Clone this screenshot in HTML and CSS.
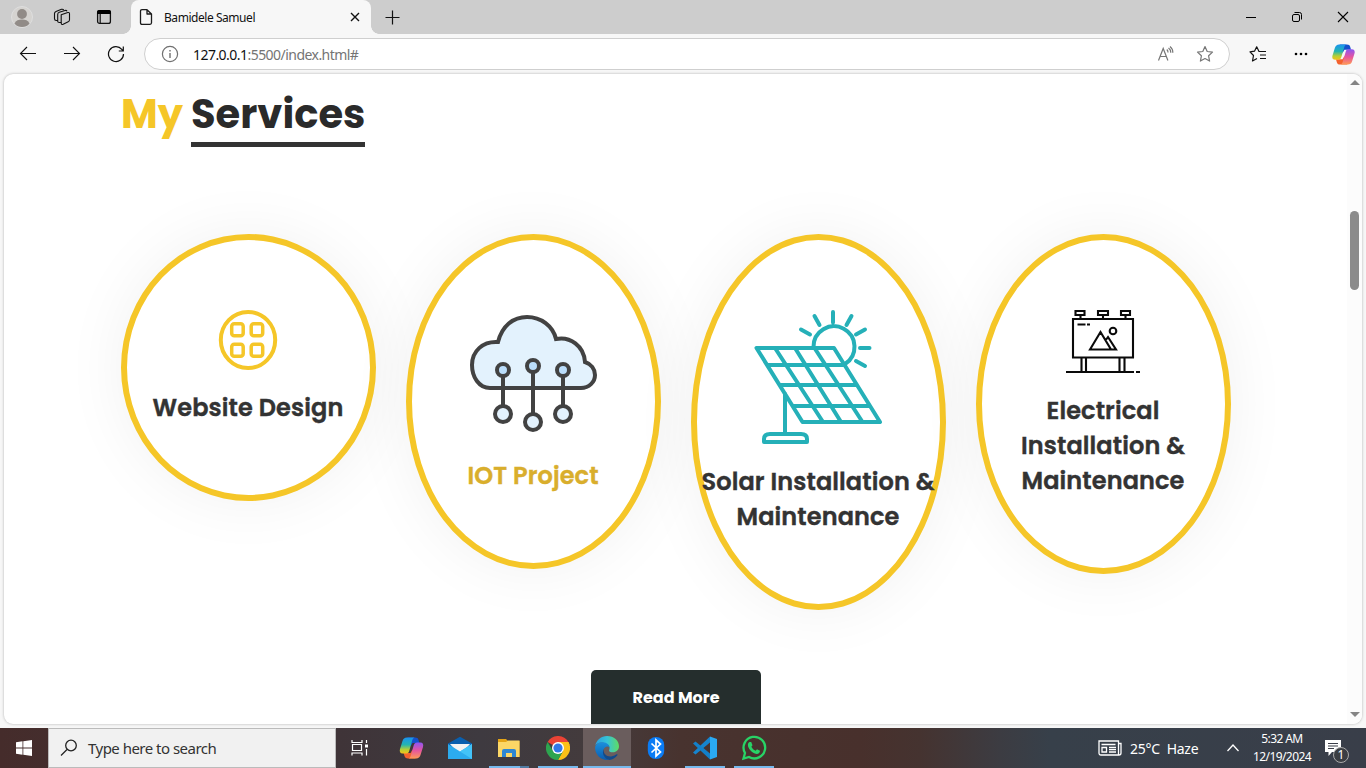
FILE: index.html
```html
<!DOCTYPE html>
<html lang="en">
<head>
<meta charset="utf-8">
<title>Bamidele Samuel</title>
<link rel="stylesheet" href="styles.css">
</head>
<body>
<svg class="defs" width="0" height="0">
  <defs>
    <linearGradient id="cpA" x1="0" y1="0" x2="0" y2="1"><stop offset="0" stop-color="#1a93f0"/><stop offset=".45" stop-color="#23b5b0"/><stop offset=".75" stop-color="#b5cf35"/><stop offset="1" stop-color="#f5c21a"/></linearGradient>
    <linearGradient id="cpB" x1="0" y1="0" x2="0" y2="1"><stop offset="0" stop-color="#8c55f5"/><stop offset=".5" stop-color="#e5559f"/><stop offset="1" stop-color="#ff9a55"/></linearGradient>
    <symbol id="copilot" viewBox="0 0 24 22">
      <path d="M8 .5h7.500c2.200 0 3 .7 3.500 2.400l.9 3H13l-2 3.600Z" fill="#1450cc"/>
      <path d="M16 21.500H8.500c-2.200 0-3-.7-3.500-2.400l-.9-3H11l2-3.600Z" fill="#f4622e"/>
      <path d="M7.500.5H15c-1.300.5-1.900 1.700-2.300 3.100L9.700 14c-.6 1.800-1.500 2.600-3.200 2.600H3.200C.6 16.600-.2 14.500.5 12L3 4C3.700 1.800 5 .5 7.500.5Z" fill="url(#cpA)"/>
      <path d="M16.500 21.500H9c1.300-.5 1.900-1.700 2.300-3.100l3-10.400c.6-1.800 1.500-2.600 3.200-2.600h3.300c2.600 0 3.400 2.100 2.700 4.600L21 18c-.7 2.200-2 3.500-4.500 3.500Z" fill="url(#cpB)"/>
    </symbol>
  </defs>
</svg>
<div class="screen">
  <header class="tabbar">
    <div class="tab-tools">
      <svg width="22" height="22" viewBox="0 0 22 22"><circle cx="11" cy="11" r="10.500" fill="#d5d3d0" stroke="#dedede"/><circle cx="11" cy="8" r="4.900" fill="#918b87"/><path d="M3.500 17.500c1.500-3.200 4-3.900 7.500-3.900s6 .7 7.500 3.900c-2 2.600-4.600 3.500-7.500 3.500s-5.500-.9-7.500-3.500Z" fill="#918b87"/></svg>
      <svg width="18" height="18" viewBox="0 0 18 18" fill="none" stroke="#111" stroke-width="1.100" stroke-linejoin="round"><path d="M8.200 6.700 14.800 4.600q1.700-.5 1.700 1.200v6q0 1.500-1.300 1.900l-5 2.500q-2 .8-2-1.200Z"/><path d="M8.200 14.500 6.600 14.500Q4.700 14.700 4.700 12.900V6.500Q4.700 4.800 6.300 4.300L12 2.500q1.500-.4 2 .8M4.600 12.500 3.200 12.500Q1.500 12.500 1.500 10.800V5.500Q1.500 4 3 3.400L8.500 1.300Q10 .9 10.800 2"/></svg>
      <svg width="16" height="16" viewBox="0 0 16 16"><rect x="1.600" y="1.600" width="12.800" height="12.800" rx="2" fill="none" stroke="#111" stroke-width="1.300"/><path d="M1 5V3q0-2 2-2h10q2 0 2 2v2Z" fill="#000"/><path d="M4.200 5v9" stroke="#111" stroke-width="1.200"/></svg>
    </div>
    <div class="tab">
      <svg width="14" height="18" viewBox="0 0 14 18" fill="none" stroke="#1b1b1b" stroke-width="1.300" stroke-linejoin="round"><path d="M3 1.700h5L12.500 6v8.800q0 1.500-1.500 1.500H3q-1.500 0-1.500-1.500V3.200Q1.500 1.700 3 1.700ZM8 1.700V6h4.500"/></svg>
      <span class="tab-title">Bamidele Samuel</span>
      <svg width="10" height="10" viewBox="0 0 10 10" stroke="#111" stroke-width="1.400"><path d="m1 1 8 8M9 1 1 9"/></svg>
    </div>
    <svg class="new-tab" width="15" height="15" viewBox="0 0 15 15" stroke="#111" stroke-width="1.200"><path d="M7.500.5v14M.5 7.500h14"/></svg>
    <div class="window-tools">
      <svg width="12" height="12" viewBox="0 0 12 12"><path d="M1 6.500h10" stroke="#000"/></svg>
      <svg width="12" height="12" viewBox="0 0 12 12" fill="none" stroke="#000"><rect x="1.500" y="3.500" width="7" height="7" rx="1.500"/><path d="M3.500 1.500h5q2 0 2 2v5"/></svg>
      <svg width="12" height="12" viewBox="0 0 12 12" stroke="#000" stroke-width="1.100"><path d="m1 1 10 10M11 1 1 11"/></svg>
    </div>
  </header>

  <nav class="toolbar">
    <div class="nav-buttons">
      <svg width="18" height="16" viewBox="0 0 18 16" fill="none" stroke="#111" stroke-width="1.100"><path d="M17 7.500H1.500M8 1 1.500 7.500 8 14"/></svg>
      <svg width="18" height="16" viewBox="0 0 18 16" fill="none" stroke="#111" stroke-width="1.100"><path d="M1 7.500h15.500M10 1l6.500 6.500L10 14"/></svg>
      <svg width="18" height="18" viewBox="0 0 18 18" fill="none" stroke="#111" stroke-width="1.200"><path d="M16.500 9A7.500 7.500 0 1 1 14.800 4.300L16.200 6M16.300 1.500V6h-4.500"/></svg>
    </div>
    <div class="address">
      <svg width="18" height="18" viewBox="0 0 18 18" fill="none" stroke="#707070" stroke-width="1.200"><circle cx="9" cy="9" r="7.600"/><path d="M9 8v5M9 5v1.500" stroke-width="1.400"/></svg>
      <span class="url"><b>127.0.0.1</b>:5500/index.html#</span>
      <svg class="read" width="17" height="18" viewBox="0 0 17 18" fill="none" stroke="#777" stroke-width="1.200"><path d="m1.500 15.500 4.700-12 4.700 12M3.200 11.500h6M9.800 4.500q1.300 1.200 1.200 3M11.500 3q2.400 1.700 2.300 4.700M13 1.500Q16 4 15.800 7.700"/></svg>
      <svg width="18" height="18" viewBox="0 0 18 18" fill="none" stroke="#777" stroke-width="1.200" stroke-linejoin="round"><path d="m9 1.500 2.200 5 5.300.6-3.900 3.700 1 5.300L9 13.500l-4.600 2.600 1-5.300L1.500 7.100l5.300-.6Z"/></svg>
    </div>
    <div class="toolbar-end">
      <svg width="18" height="18" viewBox="0 0 18 18" fill="none" stroke="#111" stroke-width="1.200" stroke-linejoin="round"><path d="M12 6.500H10L7.700 1.800 5.500 6.200l-4.500.6 3.500 3.700-1 5.500L8 13.500M11.500 6.500H17M11 10h6M11 13.500h6"/></svg>
      <svg class="dots" width="14" height="4" viewBox="0 0 14 4"><circle cx="2" cy="2" r="1.300"/><circle cx="7" cy="2" r="1.300"/><circle cx="12" cy="2" r="1.300"/></svg>
      <svg width="23" height="21"><use href="#copilot"/></svg>
    </div>
  </nav>

  <div class="viewport">
    <main class="services">
      <h1 class="heading"><span class="my">My</span><span class="underlined">Services</span></h1>
      <div class="cards">
        <article class="card">
          <svg width="60" height="60" viewBox="0 0 60 60" fill="none" stroke="#f5c628"><ellipse cx="30" cy="30" rx="27.200" ry="28" stroke-width="4"/><g stroke-width="3.500"><rect x="13.700" y="13.700" width="11.500" height="12" rx="2.500"/><rect x="33.200" y="13.700" width="11.500" height="12" rx="2.500"/><rect x="13.700" y="34.200" width="11.500" height="12" rx="2.500"/><rect x="33.200" y="34.200" width="11.500" height="12" rx="2.500"/></g></svg>
          <h2>Website Design</h2>
        </article>
        <article class="card">
          <svg width="128" height="128" viewBox="0 0 128 128" stroke="#424242" stroke-width="4"><path d="M21 78C10 78 3 67 3 55 3 41 14 31 29 32 33 16 44 7 58 7c14 0 26 9 29 22 14-3 28 7 29 23 6 2 10 7 10 13 0 7-6 13-14 13Z" fill="#e3f2fd"/><path d="M34 66v32M64 62v44M94 66v32"/><g fill="#bbdefb"><circle cx="34" cy="60" r="6"/><circle cx="64" cy="56" r="6"/><circle cx="94" cy="60" r="6"/></g><g fill="#e3f2fd"><circle cx="34" cy="104" r="8"/><circle cx="64" cy="112" r="8"/><circle cx="94" cy="104" r="8"/></g></svg>
          <h2 class="gold">IOT Project</h2>
        </article>
        <article class="card">
          <svg width="134" height="134" viewBox="0 0 134 134" fill="none" stroke="#25b0b8" stroke-width="4" stroke-linejoin="round" stroke-linecap="round"><path d="M62.500 37A20.500 20.500 0 1 1 94 54M82 2v10.500M63.500 6l5 9M100.500 6l-5 9M50 19.500l9 5M114 19.500l-9 5M109 38h9.500M105 51l9 5"/><path d="M5.500 38H83l46 74H51.500ZM16.500 55h76M29 75h77M42 96h77M24 38l48 74M44 38l46 74M63.500 38l48 74"/><path d="M34 84v39M19 124h31q6 0 6 5v3H13v-3q0-5 6-5Z"/></svg>
          <h2>Solar Installation &amp;<br>Maintenance</h2>
        </article>
        <article class="card">
          <svg width="74" height="63" viewBox="0 0 74 63" fill="none" stroke="#0a0a0a" stroke-width="2.100"><path d="M7 9h60v38.500H7ZM9.500 1h9v4h-9ZM32 1h10v4H32ZM55 1h9v4h-9ZM14.500 5v4M37 5v4M59.500 5v4M15.500 48v13M20 48v13M53.500 48v13M58.500 48v13M0 62h68M70 62h4M11.500 14.500h8M21 14.500h3M24 39.500 34.500 22 45 39.500ZM39.500 30.500l2.500-3.500L50 39.500h-5"/><circle cx="47" cy="21" r="3.300"/></svg>
          <h2>Electrical<br>Installation &amp;<br>Maintenance</h2>
        </article>
      </div>
      <a class="more">Read More</a>
    </main>
    <aside class="scrollbar"><i class="up"></i><i class="thumb"></i><i class="down"></i></aside>
  </div>

  <footer class="taskbar">
    <div class="start"><svg width="16" height="16" viewBox="0 0 16 16" fill="#fff"><path d="M0 2.200 6.500 1.300v6.300H0ZM7.300 1.200 16 0v7.600H7.300ZM0 8.400h6.500v6.300L0 13.800ZM7.300 8.400H16V16l-8.700-1.200Z"/></svg></div>
    <div class="search"><svg width="18" height="18" viewBox="0 0 18 18" fill="none" stroke="#222" stroke-width="1.300"><circle cx="11" cy="6.500" r="5.300"/><path d="M7 10.500 1 16.500"/></svg><span>Type here to search</span></div>
    <div class="apps">
      <div class="app view"><svg width="18" height="16" viewBox="0 0 18 16" fill="none" stroke="#fff" stroke-width="1.200"><path d="M1 0v2.500h10V0M1 15.500v-2.500h10v2.500M1.500 4.500h9v6h-9ZM15.500 0v3M15.500 9v6.500"/><path d="M14 4.500h3v3h-3Z" fill="#fff" stroke="none"/></svg></div>
      <div class="app"><svg width="25" height="22"><use href="#copilot"/></svg></div>
      <div class="app"><svg width="24" height="24" viewBox="0 0 24 24"><path d="M0 7.500 12 .8l12 6.700V15H0Z" fill="#0a5fae"/><path d="M2 8h20l-7 8H9Z" fill="#f3f3f3"/><path d="M0 8l12 7.500L24 8v15H0Z" fill="#2cabee"/><path d="M24 8v15L12 15.500Z" fill="#43c3f8"/></svg></div>
      <div class="app run stacked"><svg width="22" height="20" viewBox="0 0 22 20"><path d="M0 1h8l2 2h11.500v16H0Z" fill="#e5a516"/><path d="M0 4h8l2-1.500h11.500V19H0Z" fill="#fcd766"/><path d="M4 19v-6q0-2 2-2h10q2 0 2 2v6h-4v-4H8v4Z" fill="#2e87d2"/></svg></div>
      <div class="app run"><svg width="24" height="24" viewBox="0 0 24 24"><path d="M12 12 1.600 6a12 12 0 0 1 20.800 0Z" fill="#ea4335"/><path d="M12 12 22.400 6A12 12 0 0 1 12 24l5-9Z" fill="#fbc116"/><path d="M12 12l5 3-5 9A12 12 0 0 1 1.600 6L7 15Z" fill="#2da44f"/><path d="M12 6h10.400a12 12 0 0 1 1.100 3H15Z" fill="#fbc116"/><circle cx="12" cy="12" r="6" fill="#fff"/><circle cx="12" cy="12" r="4.600" fill="#3078e8"/></svg></div>
      <div class="app run active"><svg width="24" height="24" viewBox="0 0 24 24"><defs><linearGradient id="ed"><stop stop-color="#2a9fe0"/><stop offset=".5" stop-color="#36c3d8"/><stop offset="1" stop-color="#5fdc62"/></linearGradient><linearGradient id="eb" x2="0" y2="1"><stop stop-color="#1b8fdc"/><stop offset="1" stop-color="#0a5cae"/></linearGradient></defs><path d="M.3 9.500C1.500 4 6.200 0 12 0c7 0 12 4.700 12 10.300 0 3.500-2.700 6-6 6-2.800 0-4.400-1-3.900-2.100 1.500-3-.5-6.200-4-7C6.500 6 3 6.500.3 9.500Z" fill="url(#ed)"/><path d="M.1 11.500C.5 8 4 6 8 6.300c4 .3 6.700 3 6.600 5.400-1.500-2-4.500-1.500-5.800 1.300-2 4.500 1 9.800 5.500 10.800C6.500 25 0 19 .1 11.500Z" fill="url(#eb)"/><path d="M8.800 13c-1 4.700 3.200 8.300 8.200 7.300 1.800-.4 3.200-1.200 4.500-2 .7-.4 1.300.2.900.9-1.900 2.700-4.900 4.400-8.100 4.700C9 23 6.500 17 8.800 13Z" fill="#114a8c"/></svg></div>
      <div class="app"><svg width="18" height="24" viewBox="0 0 18 24"><rect x=".8" y="1" width="16.400" height="22" rx="8" fill="#0a7cf5"/><path d="m4.500 7.500 9 8.500L9 20V4l4.500 4-9 8.500" fill="none" stroke="#fff" stroke-width="1.700"/></svg></div>
      <div class="app run"><svg width="24" height="24" viewBox="0 0 24 24"><path d="M17 6.500 2.500 18.500 0 16.500 17 .5Z" fill="#1684ce"/><path d="M17 17.500 2.500 5.500 0 7.500l17 16Z" fill="#1380ca"/><path d="M17 .5 24 3v18l-7 2.500Z" fill="#2aa9f2"/></svg></div>
      <div class="app run"><svg width="26" height="26" viewBox="0 0 26 26"><path d="M2.500 23.500 4 18A10.800 10.800 0 1 1 8 22Z" fill="none" stroke="#28d366" stroke-width="2.300"/><path d="M8.500 7h1.700l1.300 3.200-1.100 1.500c1 1.900 2.300 3.200 4.200 4l1.400-1.500 3 1.500c0 2-1.500 3.300-3.500 3.200C11 18.300 7 13.700 6.900 10c0-1.300.5-2.300 1.600-3Z" fill="#28d366"/></svg></div>
    </div>
    <div class="tray">
      <svg width="24" height="16" viewBox="0 0 24 16" fill="none" stroke="#fff" stroke-width="1.300"><path d="M1 1h19.500v14H3q-2 0-2-2ZM20.500 3.500H23V13q0 2-2 2h-2M3.500 4.500h14M4 7.500h4.500v4.500H4ZM11 7.500h7M11 9.700h7M11 12h7"/></svg>
      <span class="weather">25°C&nbsp; Haze</span>
      <svg class="chevron" width="12" height="8" viewBox="0 0 12 8" fill="none" stroke="#fff" stroke-width="1.300"><path d="m.5 7 5.500-6 5.500 6"/></svg>
      <div class="clock"><span>5:32 AM</span><span>12/19/2024</span></div>
      <div class="notice"><svg width="16" height="16" viewBox="0 0 16 16"><path d="M0 0h16v12H7l-3.500 4v-4H0Z" fill="#fff"/><path d="M3 3.500h10M3 6h10M3 8.500h6" stroke="#3b3e49" stroke-width="1.200"/></svg><span class="count">1</span></div>
    </div>
  </footer>
</div>
</body>
</html>
```
FILE: styles.css
```css
* { box-sizing: border-box; }
body { margin: 0; overflow: hidden; font-family: "Segoe UI", "Noto Sans", sans-serif; }
svg { display: block; flex: none; }
.defs { position: absolute; }
.screen { width: 1366px; height: 768px; display: flex; flex-direction: column; background: #f7f7f7; overflow: hidden; }

.tabbar { height: 34px; background: #cdcdcd; display: flex; align-items: center; }
.tab-tools { width: 131px; padding-left: 11px; display: flex; align-items: center; gap: 20px; }
.tab-tools svg:last-child { margin-left: 5px; }
.tab { position: relative; width: 240px; height: 34px; padding: 0 11px 0 8px; display: flex; align-items: center; background: #f7f7f7; border-radius: 8px 8px 0 0; }
.tab::before, .tab::after { content: ""; position: absolute; bottom: 0; width: 8px; height: 8px; }
.tab::before { left: -8px; background: radial-gradient(circle at 0 0, transparent 7.500px, #f7f7f7 8px); }
.tab::after { right: -8px; background: radial-gradient(circle at 100% 0, transparent 7.500px, #f7f7f7 8px); }
.tab-title { margin-left: 11px; flex: 1; font-size: 12px; letter-spacing: -.45px; color: #111; }
.new-tab { margin-left: 14px; }
.window-tools { margin-left: auto; padding-right: 17px; display: flex; gap: 34px; }

.toolbar { height: 40px; display: flex; align-items: center; }
.nav-buttons { width: 144px; padding-left: 19px; display: flex; align-items: center; gap: 26px; }
.address { width: 1086px; height: 32px; padding: 0 15px 0 16px; display: flex; align-items: center; background: #fff; border: 1px solid #cfcfcf; border-radius: 16px; }
.url { margin-left: 14px; flex: 1; font-size: 14px; letter-spacing: -.54px; color: #747474; }
.url b { font-weight: 400; color: #111; }
.read { margin-right: 22px; }
.toolbar-end { flex: 1; padding: 0 11px 0 19px; display: flex; align-items: center; justify-content: space-between; }
.dots { margin-left: 3px; }

.viewport { width: 1358px; height: 650px; margin-left: 4px; display: flex; background: #fff; border-radius: 9px; overflow: hidden; box-shadow: 0 0 3px rgba(0,0,0,.28); }
.services { flex: 1; padding: 10px 0 0 117px; font-family: Poppins, Inter, sans-serif; }
.heading { margin: 0; height: 63px; display: flex; align-items: flex-start; font-size: 40px; line-height: 61px; font-weight: 700; color: #2a2a2a; }
.my { width: 70px; color: #f5c628; }
.underlined { width: 174px; height: 63px; border-bottom: 5px solid #333; white-space: nowrap; }
.cards { margin-top: 87px; display: flex; align-items: flex-start; gap: 30px; height: 376px; }
.card { width: 255px; padding: 70px 1px 70px 0; border: 6px solid #f5c628; border-radius: 50%; background: #fff; box-shadow: 0 0 64px rgba(0,0,0,.06); display: flex; flex-direction: column; align-items: center; gap: 20px; }
.card svg { margin-right: 1px; }
.card h2 { margin: 0; font-size: 24px; line-height: 35px; font-weight: 600; letter-spacing: .12px; -webkit-text-stroke: .4px; color: #333; text-align: center; white-space: nowrap; }
.card .gold { color: #d9ae2c; }
.more { margin: 60px 0 0 470px; width: 170px; height: 60px; display: block; background: #252e2d; border-radius: 5px; color: #fff; font-size: 16px; line-height: 55px; font-weight: 700; text-align: center; }
.scrollbar { width: 15px; padding: 6px 3px; display: flex; flex-direction: column; align-items: center; background: #fcfcfc; }
.up, .down { border: 5px solid transparent; }
.up { border-top: 0; border-bottom: 5px solid #858585; }
.down { margin-top: auto; margin-bottom: 1px; border-bottom: 0; border-top: 5px solid #858585; }
.thumb { margin-top: 126px; width: 9px; height: 79px; border-radius: 5px; background: #8b8b8b; }

.taskbar { height: 40px; margin-top: 4px; display: flex; color: #fff; background: linear-gradient(90deg, #452c2b 0, #3f3438 340px, #3e3a40 480px, #443b3c 600px, #48332f 680px, #48302c 860px, #453330 920px, #3c3c42 1000px, #37404a 1050px, #393e49 1366px); }
.start { width: 48px; display: grid; place-items: center; }
.search { width: 288px; padding-left: 11px; display: flex; align-items: center; background: #f1f1f1; border: 1px solid #bbb; color: #333; font-size: 15px; }
.search span { margin-left: 10px; letter-spacing: -.52px; }
.apps { display: flex; gap: 1px; }
.app { width: 48px; height: 40px; display: grid; place-items: center; }
.app.view { margin-right: 2px; }
.run { background: linear-gradient(#76b9ed, #76b9ed) 50% 100% / 40px 2px no-repeat; }
.run.stacked { background: linear-gradient(90deg, #76b9ed 31px, #507ba2 31px) 50% 100% / 40px 2px no-repeat; }
.run.active { background: linear-gradient(#76b9ed, #76b9ed) 50% 100% / 48px 2px no-repeat #6a5d5d; }
.tray { margin-left: auto; padding-right: 16px; display: flex; align-items: center; font-size: 14px; }
.weather { margin-left: 8px; width: 97px; letter-spacing: -.25px; white-space: pre; }
.chevron { width: 12px; }
.clock { width: 86px; display: flex; flex-direction: column; align-items: center; font-size: 12px; line-height: 18px; letter-spacing: -.6px; }
.notice { position: relative; width: 25px; height: 16px; }
.count { position: absolute; left: 8px; top: 7px; width: 16px; height: 16px; border: 1px solid #aaa; border-radius: 50%; background: #3b3e43; font-size: 12px; line-height: 14px; text-align: center; }
```
